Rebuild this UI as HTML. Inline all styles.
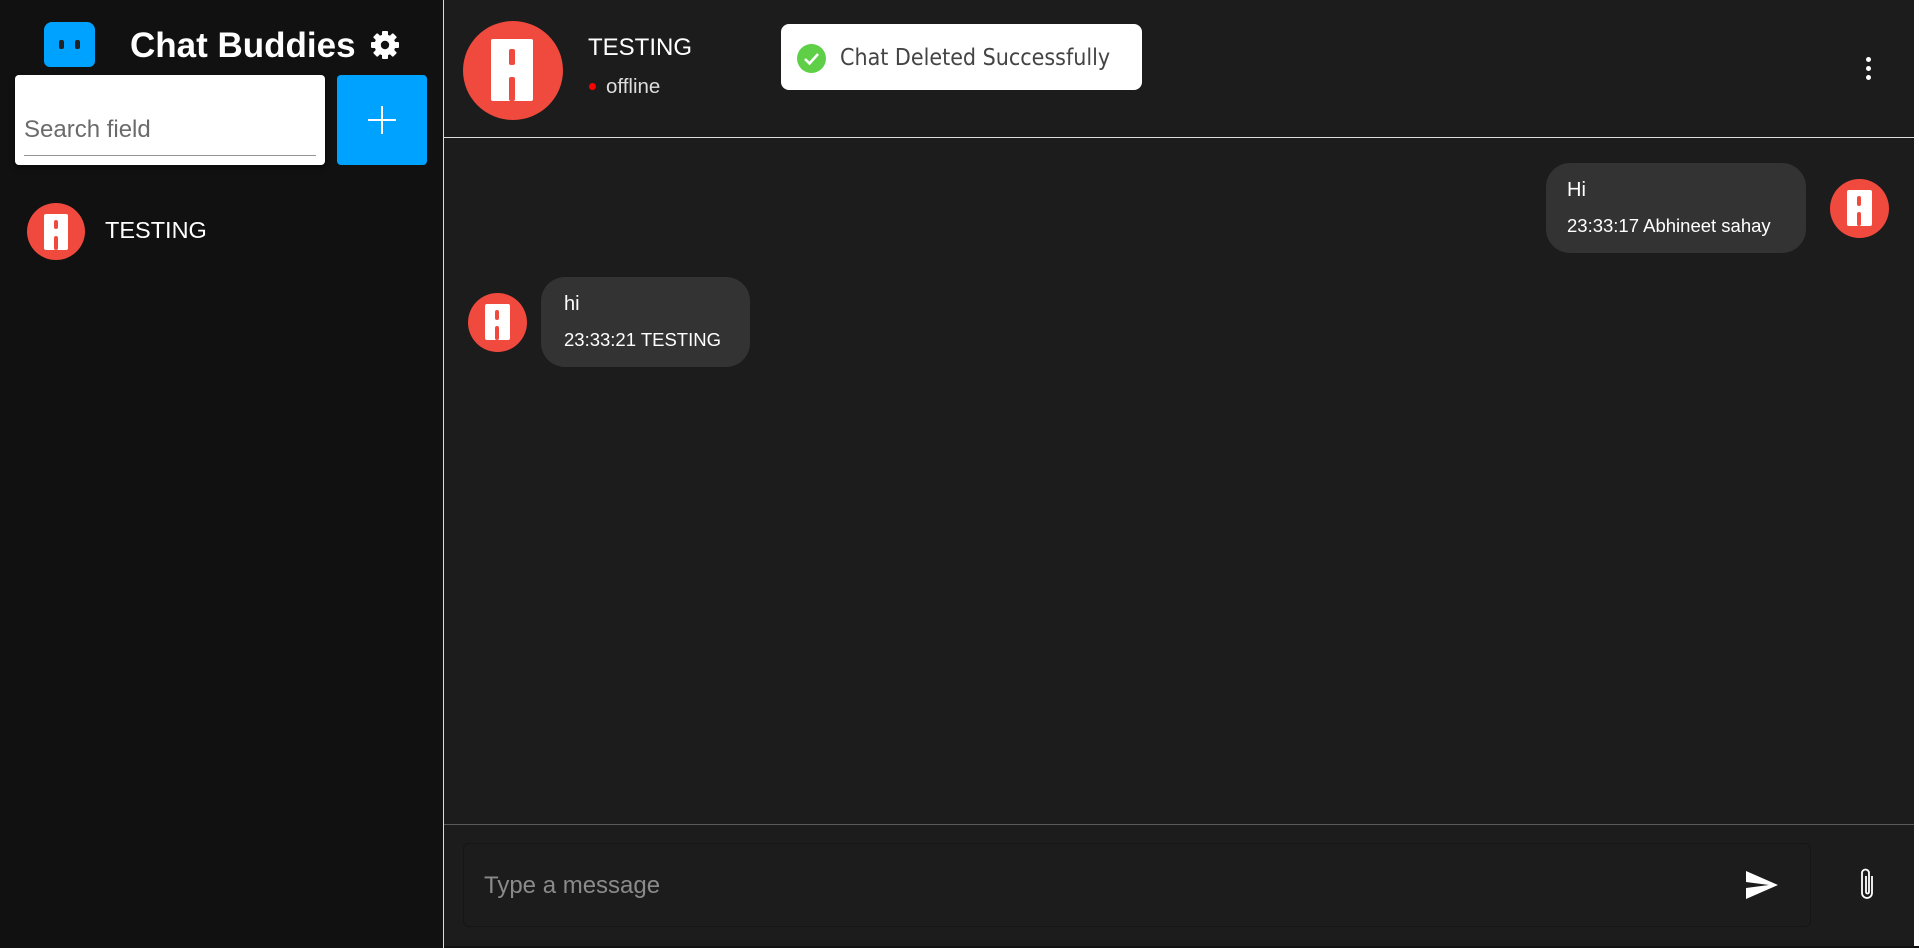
<!DOCTYPE html>
<html><head><meta charset="utf-8"><style>
*{margin:0;padding:0;box-sizing:border-box}
body{width:1919px;height:948px;background:#fff;font-family:"Liberation Sans",Arial,sans-serif;position:relative;overflow:hidden}
.side{position:absolute;left:0;top:0;width:443px;height:948px;background:#111}
.divider{position:absolute;left:443px;top:0;width:1px;height:948px;background:#ddd}
.main{position:absolute;left:444px;top:0;width:1470px;height:946px;background:#1c1c1c}
.abs{position:absolute}
.av{position:absolute;border-radius:50%;background:#f04a3e;overflow:hidden}
.av i{position:absolute;background:#fff;border-radius:2px}
.av b{position:absolute;background:#f04a3e;border-radius:2px}
</style></head><body>
<div class="side">
  <div class="abs" style="left:44px;top:22px;width:51px;height:45px;background:#00a2ff;border-radius:8px 8px 6px 6px"></div>
  <div class="abs" style="left:59px;top:40px;width:5px;height:9px;background:#222;border-radius:2px"></div>
  <div class="abs" style="left:75px;top:40px;width:5px;height:9px;background:#222;border-radius:2px"></div>
  <div class="abs" style="left:130px;top:26px;font-size:35px;font-weight:bold;color:#fff;white-space:nowrap">Chat Buddies</div>
  <svg class="abs" style="left:370px;top:30px" width="30" height="30" viewBox="0 0 30 30">
    <g fill="#fff" transform="translate(15 15)">
      <rect x="-3" y="-14" width="6" height="28" rx="1"/>
      <rect x="-3" y="-14" width="6" height="28" rx="1" transform="rotate(45)"/>
      <rect x="-3" y="-14" width="6" height="28" rx="1" transform="rotate(90)"/>
      <rect x="-3" y="-14" width="6" height="28" rx="1" transform="rotate(135)"/>
      <circle r="10.5"/>
    </g>
    <circle cx="15" cy="15" r="4.2" fill="#111"/>
  </svg>
  <div class="abs" style="left:15px;top:75px;width:310px;height:90px;background:#fff;border-radius:4px;box-shadow:0 3px 6px rgba(0,0,0,.5)"></div>
  <div class="abs" style="left:24px;top:116px;font-size:24px;color:#6b6b6b">Search field</div>
  <div class="abs" style="left:24px;top:155px;width:292px;height:1px;background:#949494"></div>
  <div class="abs" style="left:337px;top:75px;width:90px;height:90px;background:#00a2ff;border-radius:4px"></div>
  <div class="abs" style="left:368px;top:119px;width:28px;height:2px;background:#fff"></div>
  <div class="abs" style="left:381px;top:106px;width:2px;height:28px;background:#fff"></div>
  <div class="av" style="left:27px;top:203px;width:58px;height:57px"><i style="left:17px;top:11px;width:24px;height:36px"></i><b style="left:27px;top:17px;width:4px;height:9px"></b><b style="left:27px;top:33px;width:4px;height:14px"></b></div>
  <div class="abs" style="left:105px;top:217px;font-size:23.5px;color:#fff">TESTING</div>
</div>
<div class="divider"></div>
<div class="main">
  <div class="av" style="left:19px;top:21px;width:100px;height:99px"><i style="left:28px;top:18px;width:42px;height:62px"></i><b style="left:46px;top:28px;width:6px;height:16px"></b><b style="left:46px;top:56px;width:6px;height:24px"></b></div>
  <div class="abs" style="left:144px;top:34px;font-size:24px;color:#fff">TESTING</div>
  <div class="abs" style="left:145px;top:83px;width:7px;height:7px;border-radius:50%;background:#f00"></div>
  <div class="abs" style="left:162px;top:75px;font-size:20.5px;color:#ddd">offline</div>
  <div class="abs" style="left:337px;top:24px;width:361px;height:66px;background:#fff;border-radius:8px"></div>
  <div class="abs" style="left:353px;top:44px;width:29px;height:29px;border-radius:50%;background:#5fcf47"></div>
  <svg class="abs" style="left:353px;top:44px" width="29" height="29" viewBox="0 0 29 29"><path d="M8 15l4.5 4.5L21 10" stroke="#fff" stroke-width="2.6" fill="none"/></svg>
  <div class="abs" style="left:396px;top:45px;font-size:23px;color:#444;font-family:'DejaVu Sans Condensed','DejaVu Sans',sans-serif;font-stretch:condensed">Chat Deleted Successfully</div>
  <div class="abs" style="left:1422px;top:57px;width:5px;height:5px;border-radius:50%;background:#fff"></div>
  <div class="abs" style="left:1422px;top:66px;width:5px;height:5px;border-radius:50%;background:#fff"></div>
  <div class="abs" style="left:1422px;top:75px;width:5px;height:5px;border-radius:50%;background:#fff"></div>
  <div class="abs" style="left:0;top:137px;width:1470px;height:1px;background:#ddd"></div>

  <div class="abs" style="left:1102px;top:163px;width:260px;height:90px;background:#333;border-radius:24px"></div>
  <div class="abs" style="left:1123px;top:179px;font-size:20px;color:#fff">Hi</div>
  <div class="abs" style="left:1123px;top:215px;font-size:18.5px;color:#fff;white-space:nowrap">23:33:17 Abhineet sahay</div>
  <div class="av" style="left:1386px;top:179px;width:59px;height:59px"><i style="left:17px;top:11px;width:25px;height:36px"></i><b style="left:27px;top:17px;width:4px;height:10px"></b><b style="left:27px;top:33px;width:4px;height:14px"></b></div>

  <div class="av" style="left:24px;top:293px;width:59px;height:59px"><i style="left:17px;top:11px;width:25px;height:36px"></i><b style="left:27px;top:17px;width:4px;height:10px"></b><b style="left:27px;top:33px;width:4px;height:14px"></b></div>
  <div class="abs" style="left:97px;top:277px;width:209px;height:90px;background:#333;border-radius:24px"></div>
  <div class="abs" style="left:120px;top:293px;font-size:20px;color:#fff">hi</div>
  <div class="abs" style="left:120px;top:329px;font-size:18.5px;color:#fff;white-space:nowrap">23:33:21 TESTING</div>

  <div class="abs" style="left:0;top:824px;width:1470px;height:1px;background:#5a5a5a"></div>
  <div class="abs" style="left:19px;top:843px;width:1348px;height:84px;border:1px solid #151515;border-radius:6px"></div>
  <div class="abs" style="left:40px;top:872px;font-size:24px;color:#8a8a8a">Type a message</div>
  <svg class="abs" style="left:1301px;top:871px" width="33" height="28" viewBox="0 0 33 28"><path d="M1 0L33 14 1 28 1 17 24 14 1 11z" fill="#fff"/></svg>
  <svg class="abs" style="left:1412px;top:866px" width="22" height="38" viewBox="0 0 22 38"><path d="M16 10v17a5 5 0 0 1-10 0V7a3.5 3.5 0 0 1 7 0v19a1.5 1.5 0 0 1-3 0V10" stroke="#fff" stroke-width="1.8" fill="none"/></svg>
</div>
<div class="abs" style="left:444px;top:946px;width:1475px;height:2px;background:#111"></div>
</body></html>
